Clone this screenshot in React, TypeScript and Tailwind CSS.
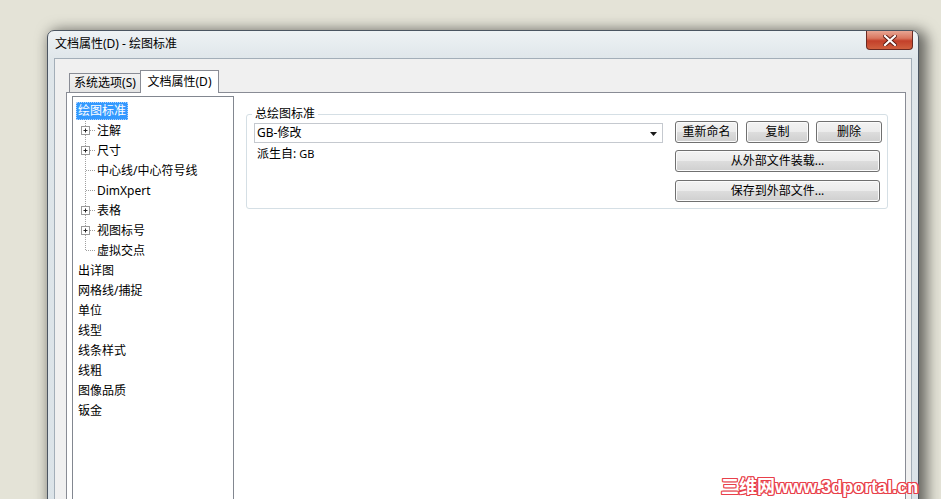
import React from "react";

const FONT = "font-['Noto_Sans','Noto_Sans_CJK_SC',sans-serif]";

function Guide({ box, last }: { box: boolean; last: boolean }) {
  const dot = { stroke: "#a0a0a0", strokeDasharray: "1 1", strokeWidth: 1 };
  return (
    <svg width="19" height="20" className="shrink-0 block">
      {box ? (
        <>
          <line x1="9.5" y1="0" x2="9.5" y2="5" {...dot} />
          {!last && <line x1="9.5" y1="14" x2="9.5" y2="20" {...dot} />}
          <line x1="14" y1="9.5" x2="19" y2="9.5" {...dot} />
          <rect x="5.5" y="5.5" width="8" height="8" fill="#fff" stroke="#9a9a9a" />
          <line x1="7.5" y1="9.5" x2="11.5" y2="9.5" stroke="#2b2b2b" />
          <line x1="9.5" y1="7.5" x2="9.5" y2="11.5" stroke="#2b2b2b" />
        </>
      ) : (
        <>
          <line x1="9.5" y1="0" x2="9.5" y2={last ? "10" : "20"} {...dot} />
          <line x1="10" y1="9.5" x2="19" y2="9.5" {...dot} />
        </>
      )}
    </svg>
  );
}

const children: { label: string; box: boolean }[] = [
  { label: "注解", box: true },
  { label: "尺寸", box: true },
  { label: "中心线/中心符号线", box: false },
  { label: "DimXpert", box: false },
  { label: "表格", box: true },
  { label: "视图标号", box: true },
  { label: "虚拟交点", box: false },
];

const topItems = ["出详图", "网格线/捕捉", "单位", "线型", "线条样式", "线粗", "图像品质", "钣金"];

function Btn({ children, className }: { children: React.ReactNode; className: string }) {
  return (
    <button
      className={`${className} h-[22px] rounded-[3px] border border-[#707070] bg-[linear-gradient(#f3f3f3_0%,#ebebeb_50%,#dddddd_50%,#cfcfcf_100%)] shadow-[inset_0_0_0_1px_#fbfbfb] text-[12px] leading-[18px] text-black flex items-center justify-center`}
    >
      {children}
    </button>
  );
}

export default function App() {
  return (
    <div className={`relative w-[941px] h-[499px] overflow-hidden bg-[#e4e3d7] pt-[30px] pl-[47px] ${FONT} text-[12px] text-black`}>
      {/* Window */}
      <div className="relative w-[872px] h-[540px] rounded-t-[7px] border border-[#4b5561] bg-[linear-gradient(#eef2f4_0px,#dfe6ea_28px,#dbe3e8_100%)] shadow-[5px_3px_14px_3px_rgba(0,0,0,0.55)] px-[6px] flex flex-col">
        {/* Title bar */}
        <div className="h-[27px] flex items-center pl-[1px] pb-[1px] text-[12px] leading-[16px]">
          文档属性(D) - 绘图标准
        </div>
        {/* Close button */}
        <div className="absolute top-0 right-[5px] w-[47px] h-[19px] rounded-b-[4px] border border-t-0 border-[#6b2a22] bg-[linear-gradient(#e8a593_0%,#d9765f_40%,#c3402a_55%,#d0603f_100%)] flex items-center justify-center">
          <svg width="14" height="11" viewBox="0 0 14 11">
            <path d="M2 1 L12 10 M12 1 L2 10" stroke="#5a1a12" strokeWidth="4" strokeLinecap="square" />
            <path d="M2 1 L12 10 M12 1 L2 10" stroke="#ffffff" strokeWidth="2.2" strokeLinecap="square" />
          </svg>
        </div>
        {/* Client area */}
        <div className="flex-1 border border-b-0 border-[#a3aeb8] bg-[#f0f0f0] flex flex-col">
          {/* Tabs */}
          <div className="flex items-end pl-[14px] pt-[11px]">
            <div className="w-[72px] h-[19px] border border-b-0 border-[#898c95] bg-[linear-gradient(#f3f3f3,#e5e5e5)] flex items-center justify-center leading-[16px]">
              系统选项(S)
            </div>
            <div className="relative z-10 -ml-[1px] -mb-[1px] w-[79px] h-[23px] border border-b-0 border-[#898c95] bg-white flex items-center justify-center pb-[1px] leading-[16px]">
              文档属性(D)
            </div>
          </div>
          {/* Panel */}
          <div className="flex-1 ml-[11px] mr-[5px] border border-b-0 border-[#898c95] bg-white flex pl-[5px] pt-[3px]">
            {/* Tree */}
            <div className="w-[162px] h-[440px] border border-[#828790] bg-white pt-[4px] pl-[3px] flex flex-col">
              <div className="h-[20px] flex items-center">
                <span className="h-[18px] leading-[18px] px-[2px] bg-[#3399ff] text-white outline outline-1 outline-dotted outline-[#a8d0ff] -outline-offset-1">
                  绘图标准
                </span>
              </div>
              {children.map((c, i) => (
                <div key={c.label} className="h-[20px] flex items-center">
                  <Guide box={c.box} last={i === children.length - 1} />
                  <span className="px-[2px] leading-[18px]">{c.label}</span>
                </div>
              ))}
              {topItems.map((t) => (
                <div key={t} className="h-[20px] flex items-center">
                  <span className="px-[2px] leading-[18px]">{t}</span>
                </div>
              ))}
            </div>
            {/* Right content */}
            <div className="flex-1 ml-[12px] mr-[17px]">
              <fieldset className="mt-[11px] border border-[#d5dfe5] rounded-[3px] pl-[5px] pr-[5px] pb-[6px]">
                <legend className="px-[3px] leading-[14px]">总绘图标准</legend>
                <div className="flex items-start">
                  <div className="flex-1 ml-[2px] mr-[12px] pt-[2px]">
                    <div className="relative h-[20px] border border-[#c5c9cf] bg-white pl-[2px] flex items-center leading-[16px]">
                      GB-修改
                      <svg className="absolute right-[5px] top-[8px]" width="7" height="4" viewBox="0 0 7 4">
                        <path d="M0 0 H7 L3.5 4 Z" fill="#1a1a1a" />
                      </svg>
                    </div>
                    <div className="mt-[3px] pl-[3px] leading-[16px]">
                      派生自: <span className="text-[11px]">GB</span>
                    </div>
                  </div>
                  <div className="w-[207px] flex flex-col">
                    <div className="flex">
                      <Btn className="w-[63px]">重新命名</Btn>
                      <Btn className="w-[63px] ml-[8px]">复制</Btn>
                      <Btn className="w-[66px] ml-[7px]">删除</Btn>
                    </div>
                    <Btn className="w-[205px] mt-[7px]">从外部文件装载...</Btn>
                    <Btn className="w-[205px] mt-[8px]">保存到外部文件...</Btn>
                  </div>
                </div>
              </fieldset>
            </div>
          </div>
        </div>
      </div>
      {/* Watermark */}
      <div className="absolute left-[721px] top-[477px] text-[18px] leading-[20px] font-bold text-white font-['Liberation_Sans','Noto_Sans_CJK_SC',sans-serif] [text-shadow:1px_0_#e8404a,-1px_0_#e8404a,0_1px_#e8404a,0_-1px_#e8404a,1px_1px_#e8404a,-1px_-1px_#e8404a,1px_-1px_#e8404a,-1px_1px_#e8404a]">
        三维网www.3dportal.cn
      </div>
    </div>
  );
}
